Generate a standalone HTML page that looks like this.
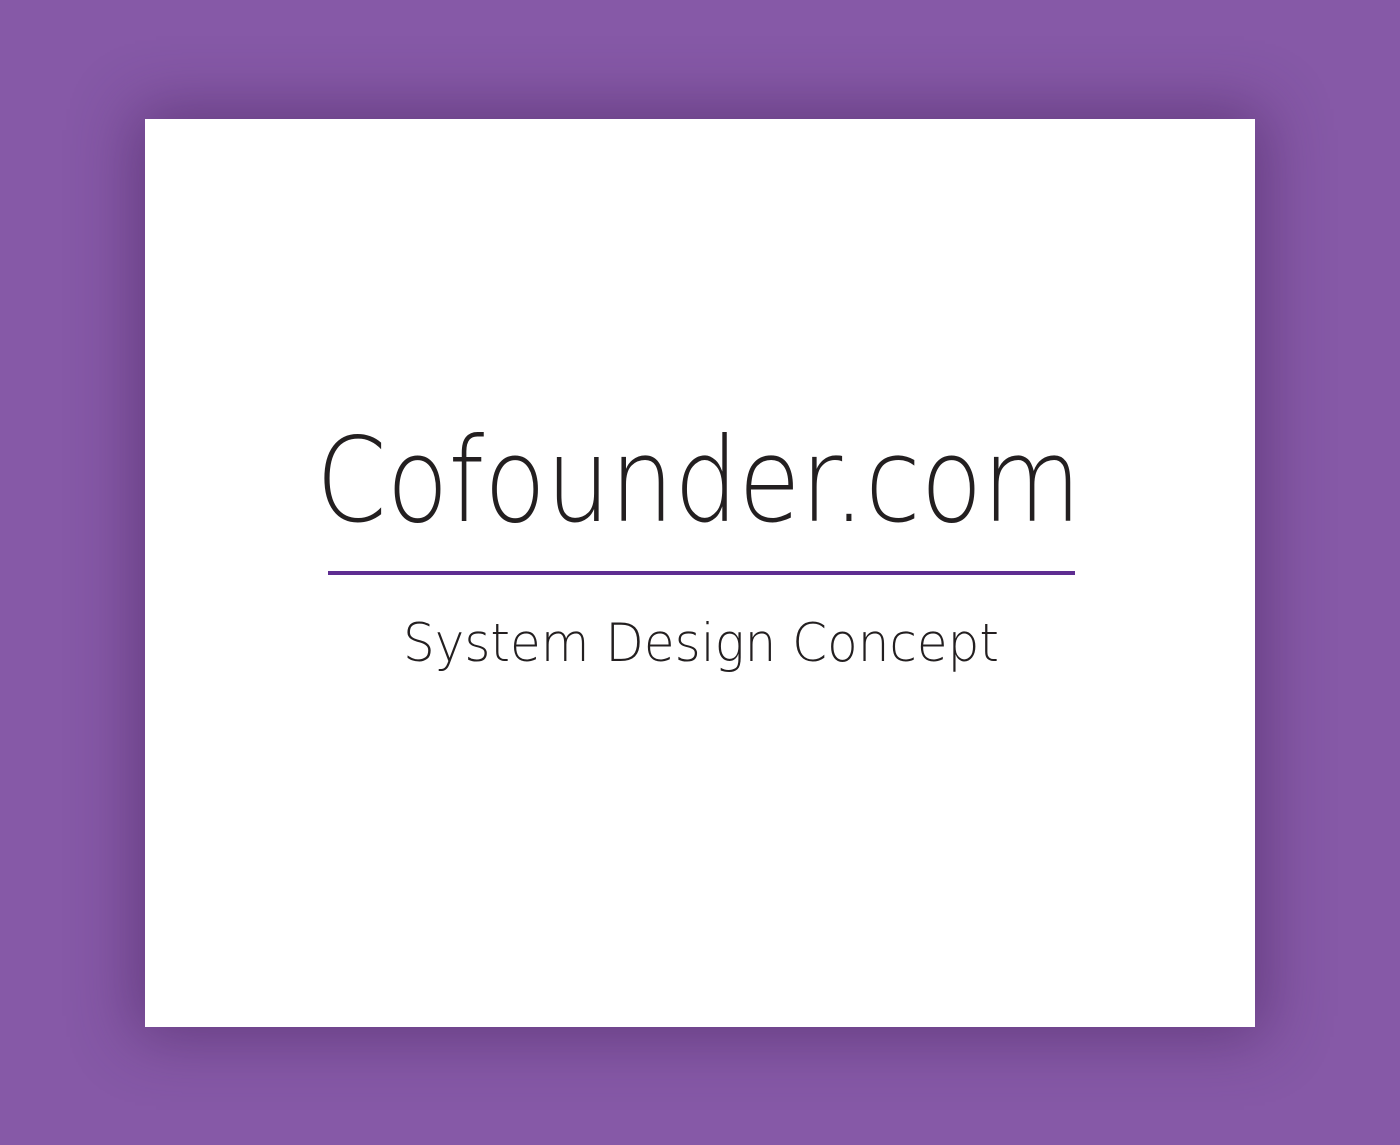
<!DOCTYPE html>
<html><head><meta charset="utf-8"><style>
html,body{margin:0;padding:0;width:1400px;height:1145px;overflow:hidden;background:#8659a7;}
.card{position:absolute;left:145px;top:119px;width:1110px;height:908px;background:#fff;box-shadow:0 0 60px 10px rgba(60,25,80,0.45);}
.t{position:absolute;white-space:nowrap;font-family:"DejaVu Sans","Liberation Sans",sans-serif;color:#231f20;font-weight:200;transform-origin:0 0;}
#title{left:316px;top:414px;font-size:117px;line-height:133px;}
#sub{left:403px;top:612px;font-size:53px;line-height:64px;}
.line{position:absolute;left:328px;top:571px;width:747px;height:4px;background:#5e2d91;}
</style></head><body>
<div class="card"></div>
<div class="t" id="title">Cofounder.com</div>
<div class="line"></div>
<div class="t" id="sub">System Design Concept</div>
<script>
function fit(id,w){var e=document.getElementById(id);var r=e.getBoundingClientRect().width;e.style.transform='scaleX('+(w/r)+')';}
fit('title',765);fit('sub',596);
</script>
</body></html>
